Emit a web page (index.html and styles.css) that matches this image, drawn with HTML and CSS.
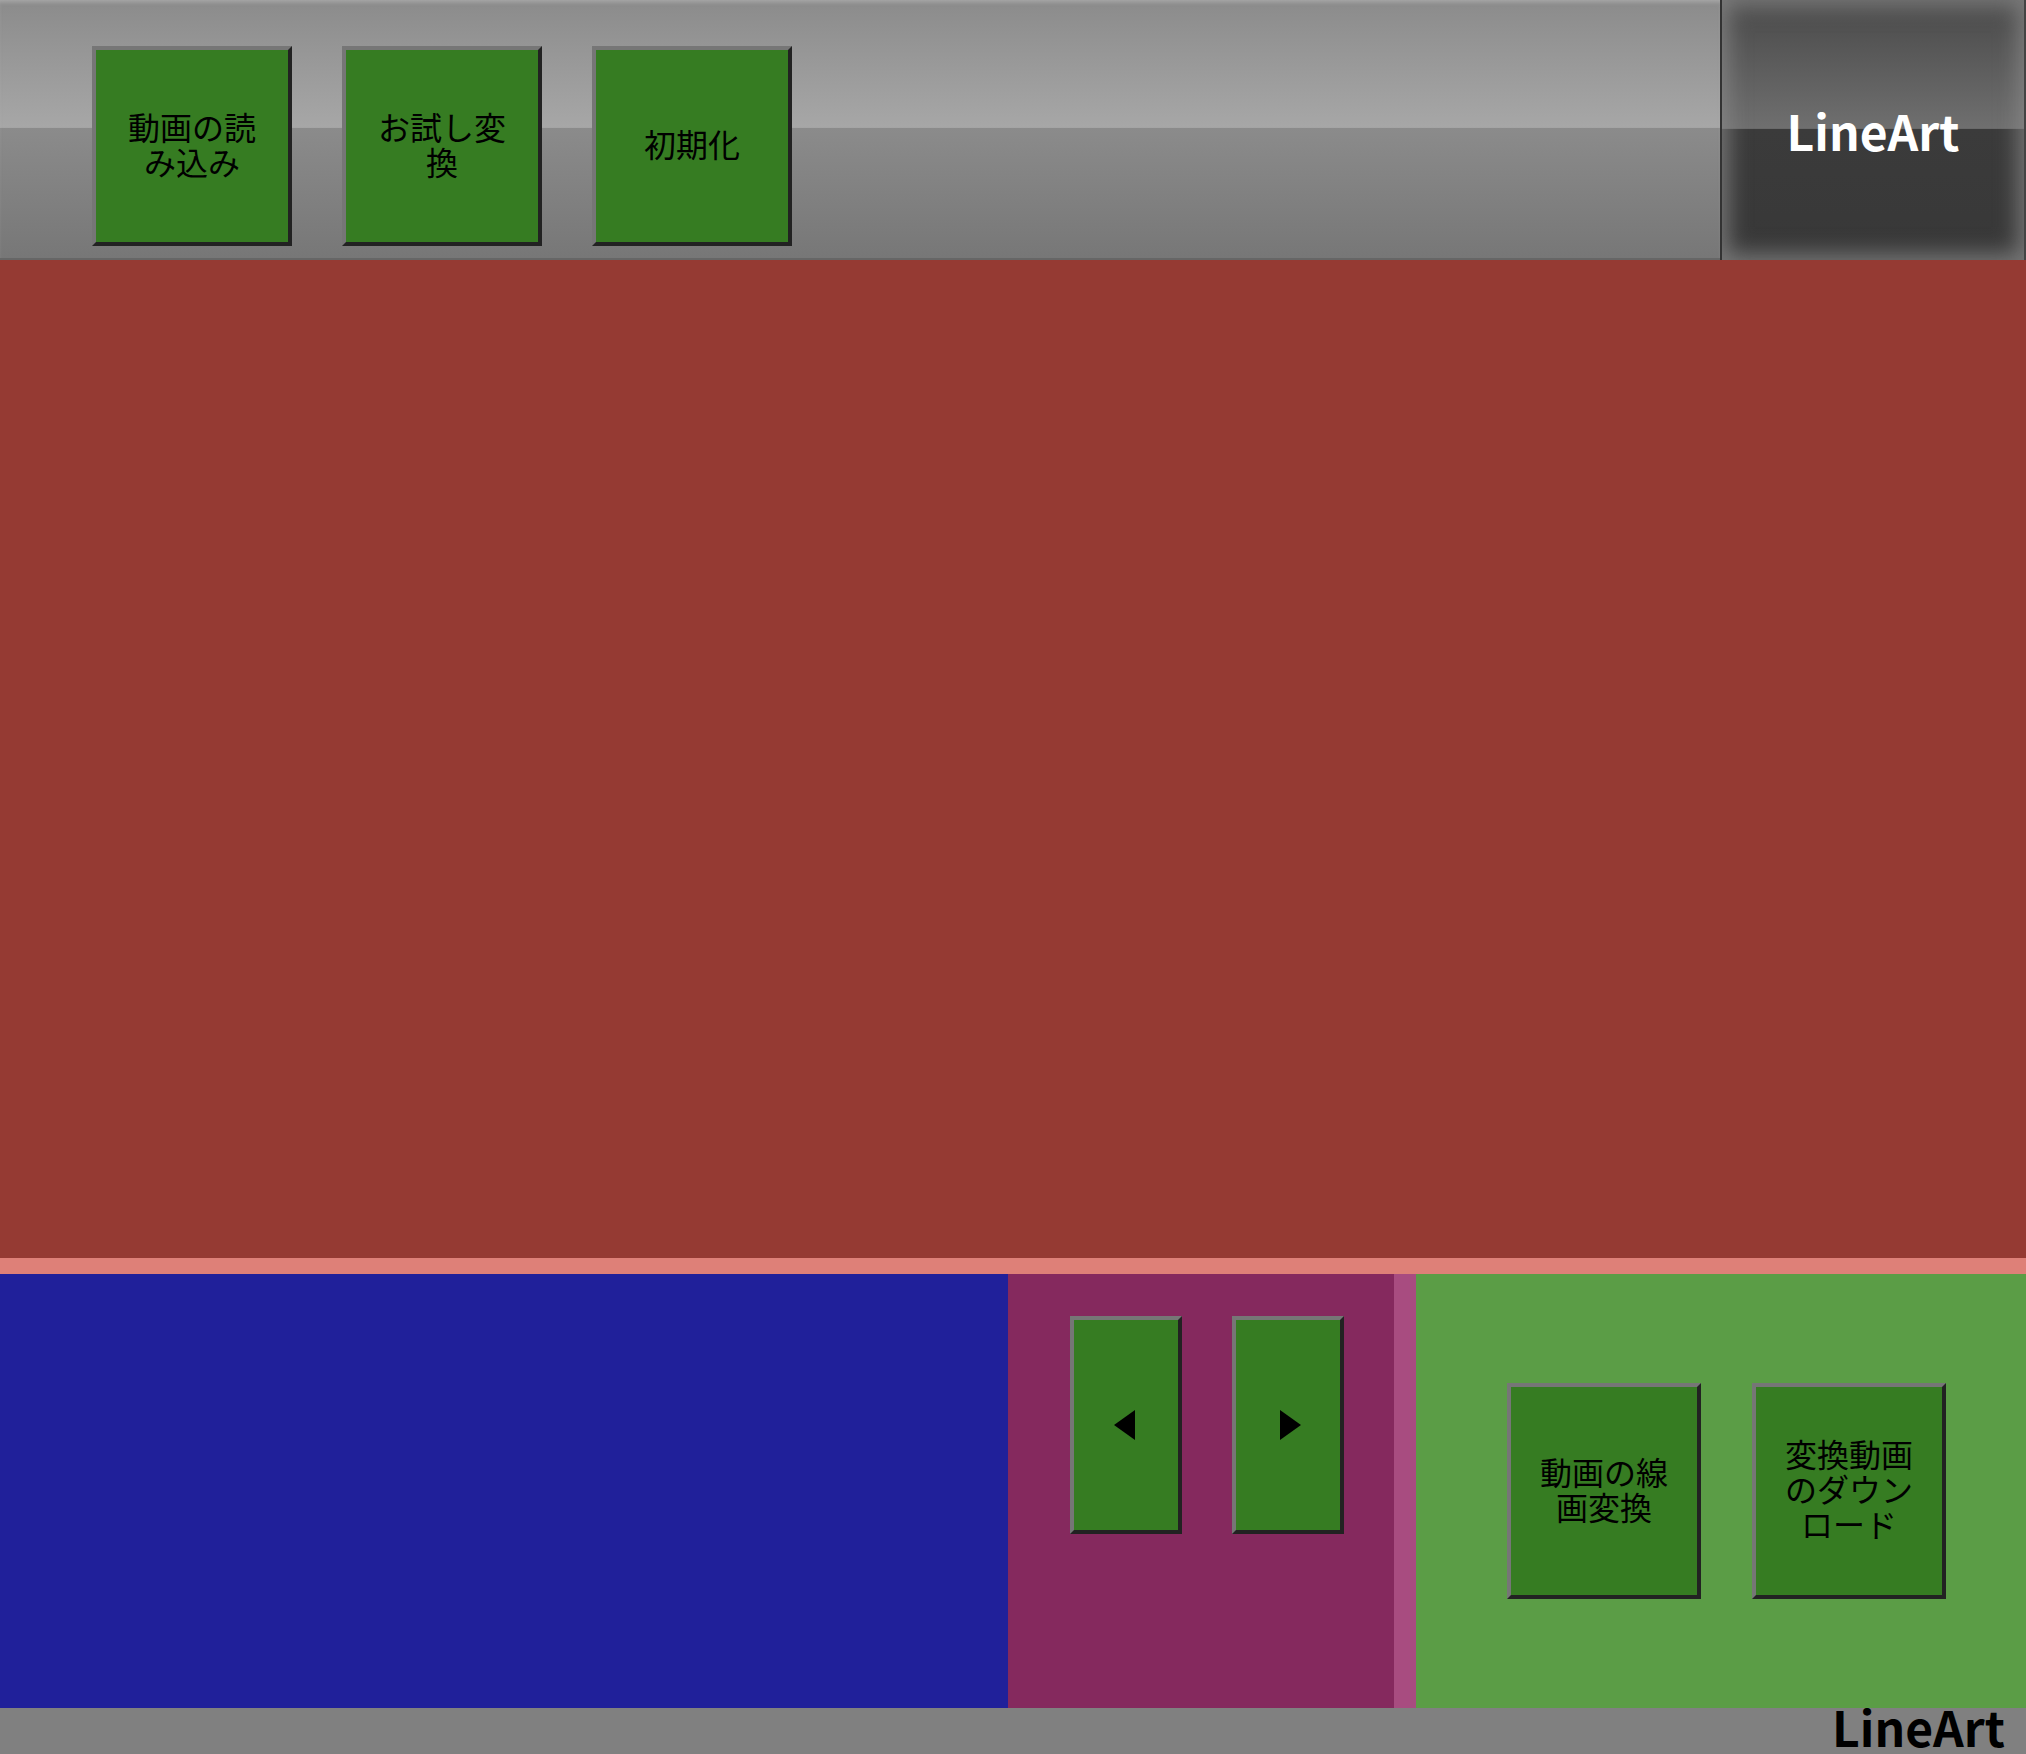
FILE: index.html
```html
<!DOCTYPE html>
<html lang="ja">
<head>
<meta charset="utf-8">
<title>LineArt</title>
<link rel="stylesheet" href="styles.css">
</head>
<body>
<div class="app">
  <header class="header">
    <nav class="toolbar">
      <button class="btn btn-top">動画の読み込み</button>
      <button class="btn btn-top">お試し変換</button>
      <button class="btn btn-top">初期化</button>
    </nav>
    <div class="logo">LineArt</div>
  </header>
  <main class="stage"></main>
  <div class="divider"></div>
  <section class="controls">
    <div class="panel-blue"></div>
    <div class="panel-nav">
      <button class="btn btn-arrow" aria-label="前へ">
        <svg class="arrow-prev" width="21" height="30" viewBox="0 0 21 30"><polygon points="21,0 21,30 0,15" fill="#000"/></svg>
      </button>
      <button class="btn btn-arrow" aria-label="次へ">
        <svg class="arrow-next" width="21" height="30" viewBox="0 0 21 30"><polygon points="0,0 0,30 21,15" fill="#000"/></svg>
      </button>
    </div>
    <div class="panel-strip"></div>
    <div class="panel-actions">
      <button class="btn btn-action">動画の線画変換</button>
      <button class="btn btn-action">変換動画のダウンロード</button>
    </div>
  </section>
  <footer class="footer"><span class="footer-logo">LineArt</span></footer>
</div>
</body>
</html>
```

FILE: styles.css
```css
* { box-sizing: border-box; }

html, body {
  margin: 0;
  padding: 0;
}

body {
  font-family: "Noto Sans CJK JP", "Noto Sans", sans-serif;
  background: #808080;
}

.app {
  display: flex;
  flex-direction: column;
  width: 2026px;
  height: 1754px;
  overflow: hidden;
}

/* ---------- header ---------- */
.header {
  display: flex;
  height: 260px;
  flex: none;
}

.toolbar {
  flex: 1;
  display: flex;
  align-items: flex-start;
  gap: 50px;
  padding: 46px 0 0 92px;
  background: linear-gradient(to bottom, #8b8b8b 0%, #a7a7a7 49.4%, #8b8b8b 49.6%, #777777 100%);
  border-bottom: 2px solid #666;
  box-shadow: inset 0 4px 4px -2px rgba(200, 200, 200, 0.5);
}

.logo {
  width: 306px;
  flex: none;
  display: flex;
  align-items: center;
  justify-content: center;
  border-left: 2px solid #333;
  border-right: 2px solid #444;
  background: linear-gradient(to bottom, #494949 0%, #6f6f6f 49.4%, #3b3b3b 49.6%, #383838 100%);
  box-shadow: inset 0 0 22px 6px rgba(140, 140, 140, 0.75);
  color: #fff;
  font-weight: 700;
  font-size: 48px;
}

/* ---------- buttons ---------- */
.btn {
  display: flex;
  align-items: center;
  justify-content: center;
  margin: 0;
  background: #367c22;
  border: 4px solid;
  border-color: #767676 #222 #222 #767676;
  color: #000;
  font-family: "Noto Sans CJK JP", sans-serif;
  font-size: 32px;
  line-height: 35px;
  text-align: center;
  cursor: pointer;
  padding: 0 22px 5px;
}

.btn-top {
  width: 200px;
  height: 200px;
}

.btn-arrow {
  width: 112px;
  height: 218px;
  padding: 0;
}

.arrow-prev { margin-right: 4px; }
.arrow-next { margin-left: 4px; }

.btn-action {
  width: 194px;
  height: 216px;
}

/* ---------- main stage ---------- */
.stage {
  flex: 1;
  background: #953a33;
}

.divider {
  height: 16px;
  flex: none;
  background: #de8078;
}

/* ---------- controls ---------- */
.controls {
  height: 434px;
  flex: none;
  display: grid;
  grid-template-columns: 1008px 386px 22px 1fr;
}

.panel-blue {
  background: #20209a;
}

.panel-nav {
  background: #85295e;
  display: flex;
  align-items: flex-start;
  gap: 50px;
  padding: 42px 0 0 62px;
}

.panel-strip {
  background: #a84c80;
}

.panel-actions {
  background: #5b9d46;
  display: flex;
  align-items: center;
  gap: 51px;
  padding-left: 91px;
}

/* ---------- footer ---------- */
.footer {
  height: 46px;
  flex: none;
  background: #808080;
  display: flex;
  justify-content: flex-end;
  align-items: flex-start;
  padding-right: 21px;
}

.footer-logo {
  font-weight: 700;
  font-size: 48px;
  line-height: 36px;
  color: #000;
}
```
